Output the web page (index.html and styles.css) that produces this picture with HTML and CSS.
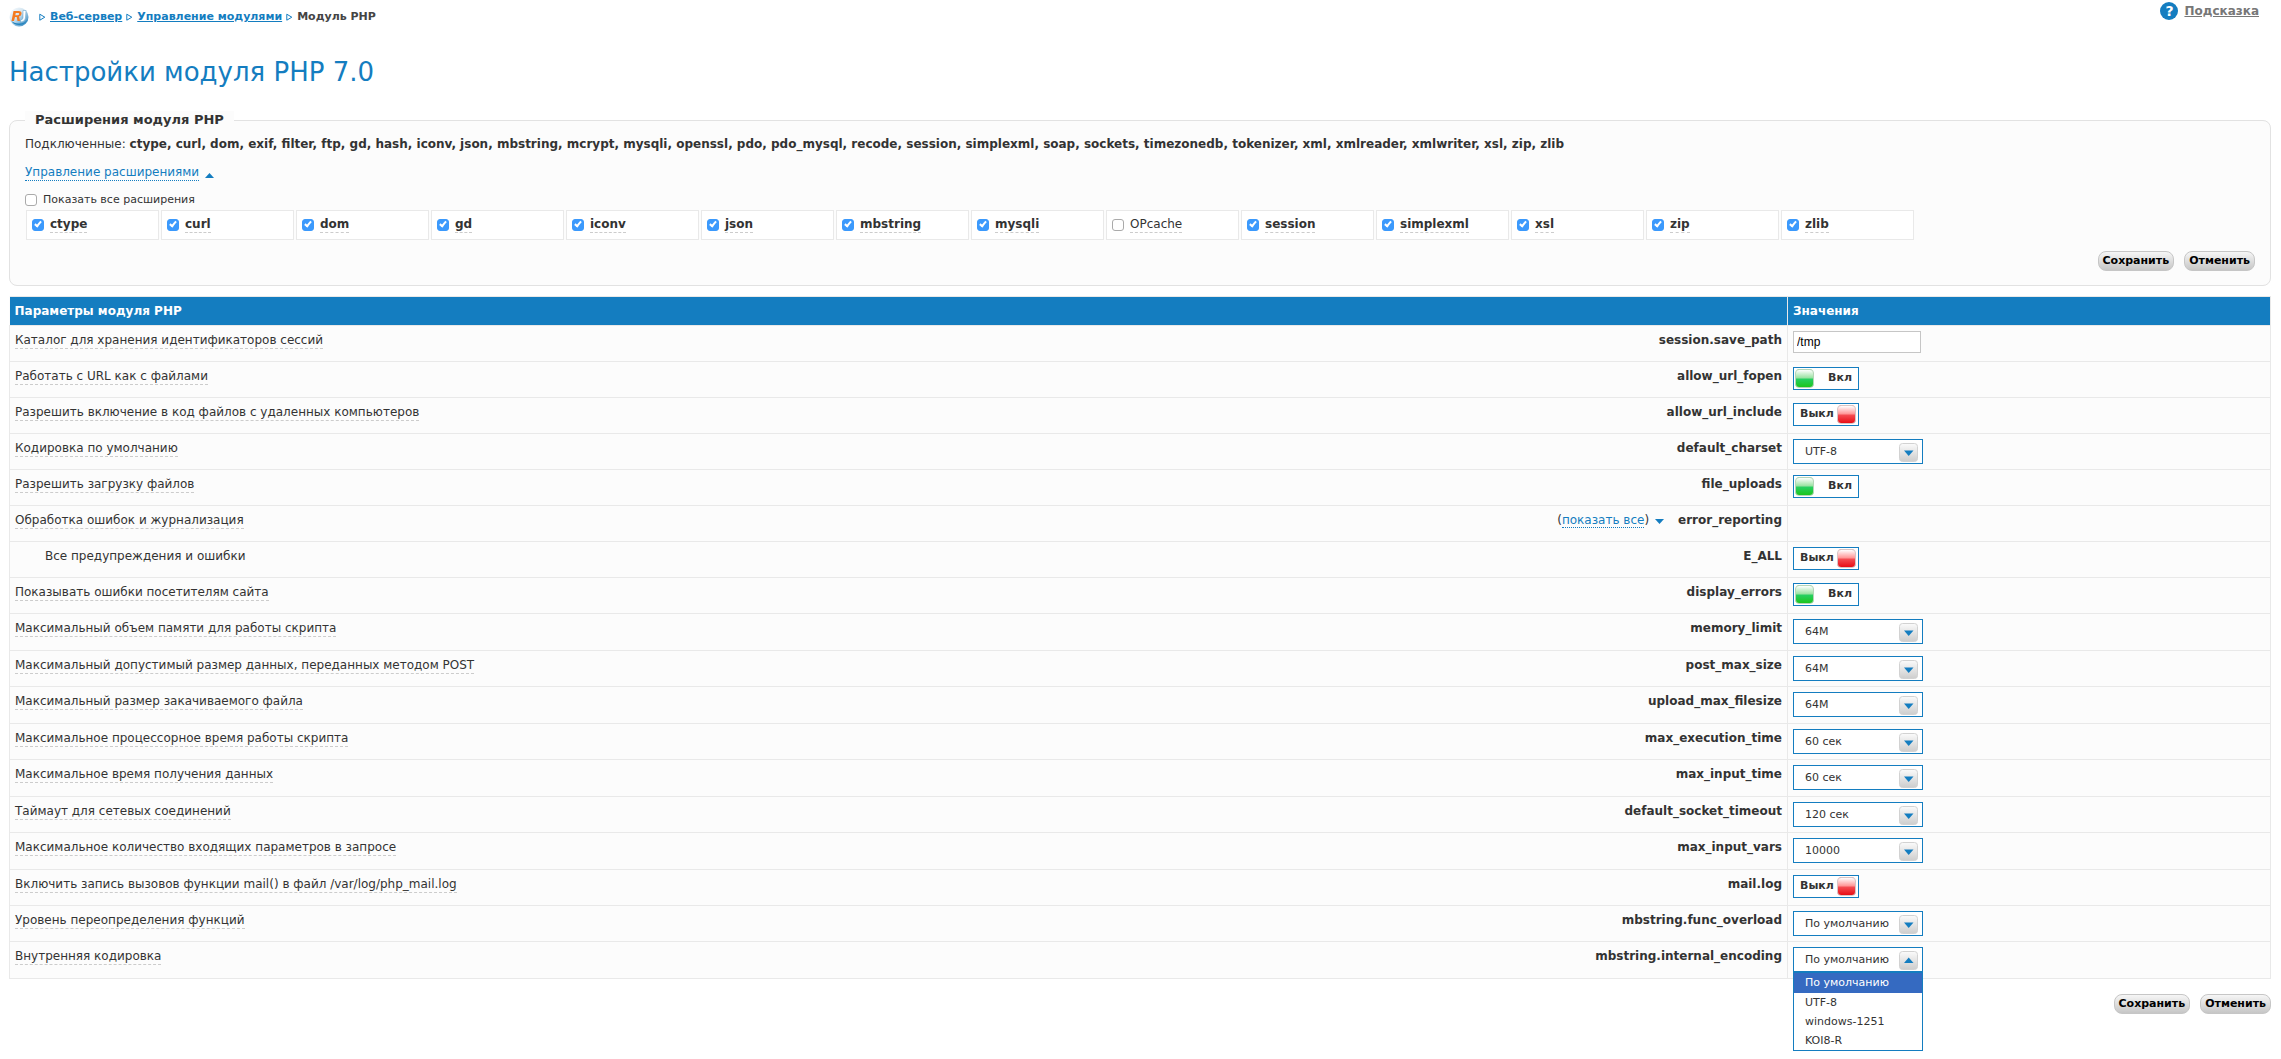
FILE: index.html
```html
<!DOCTYPE html>
<html lang="ru">
<head>
<meta charset="utf-8">
<title>Настройки модуля PHP 7.0</title>
<link rel="stylesheet" href="styles.css">
</head>
<body>
<svg width="0" height="0" class="defs" aria-hidden="true">
  <defs>
    <linearGradient id="arrow-face" x1="0" y1="0" x2="0" y2="1"><stop offset="0" stop-color="#fbfbfb"/><stop offset="1" stop-color="#cdcdcd"/></linearGradient>
    <symbol id="down" viewBox="0 0 19 19"><rect x=".5" y=".5" width="18" height="18" rx="3" fill="url(#arrow-face)" stroke="#d2d2d2"/><path d="M5 7.500h9.500L9.700 13z" fill="#147dc0"/></symbol>
    <symbol id="up" viewBox="0 0 19 19"><rect x=".5" y=".5" width="18" height="18" rx="3" fill="url(#arrow-face)" stroke="#d2d2d2"/><path d="M5 12h9.500L9.700 6.500z" fill="#147dc0"/></symbol>
    <symbol id="crumb" viewBox="0 0 7 9"><path d="M.8 1.200v6L5.800 4.200z" fill="none" stroke="#147dc0"/></symbol>
  </defs>
</svg>
<header class="top">
  <nav class="crumbs" aria-label="Навигация">
    <svg class="logo" viewBox="0 0 20 20" aria-hidden="true">
      <defs><linearGradient id="globe" x1="0" y1="0" x2="1" y2="1"><stop offset="0" stop-color="#fff"/><stop offset=".45" stop-color="#cfe3f0"/><stop offset="1" stop-color="#0f73b5"/></linearGradient></defs>
      <circle cx="10" cy="10" r="9.500" fill="url(#globe)"/>
      <path d="M2 13.500A9.500 9.500 0 0 0 19 12Q16 16.500 10 16.500 5 16.500 2 13.500z" fill="#2585bf"/>
      <path d="M4.500 4h5Q13 4 12.500 7 12 9 10 9.600L11 14H8.500L7.700 10H6L5 14H2.500zM6.800 6 6.300 8.200H8.500Q10 8.200 10.200 7T9 6z" fill="#f47a1f"/>
      <path d="M14 3.500h3L16.500 11Q16 15 11.500 15V13Q13.500 13 14 11z" fill="#fff" stroke="#5b9fc9" stroke-width=".5"/>
    </svg>
    <svg class="sep" aria-hidden="true"><use href="#crumb"/></svg>
    <a href="#server">Веб-сервер</a>
    <svg class="sep" aria-hidden="true"><use href="#crumb"/></svg>
    <a href="#modules">Управление модулями</a>
    <svg class="sep" aria-hidden="true"><use href="#crumb"/></svg>
    <span class="current">Модуль PHP</span>
  </nav>
  <a class="help" href="#help"><span class="help-icon" aria-hidden="true">?</span><span class="help-text">Подсказка</span></a>
</header>
<main>
  <h1>Настройки модуля PHP 7.0</h1>
  <fieldset class="box">
    <legend>Расширения модуля PHP</legend>
    <p class="enabled">Подключенные: <b>ctype, curl, dom, exif, filter, ftp, gd, hash, iconv, json, mbstring, mcrypt, mysqli, openssl, pdo, pdo_mysql, recode, session, simplexml, soap, sockets, timezonedb, tokenizer, xml, xmlreader, xmlwriter, xsl, zip, zlib</b></p>
    <p class="manage"><a class="dotted" href="#ext">Управление расширениями</a><svg class="tri" viewBox="0 0 9 5" aria-hidden="true"><path d="M0 5h9L4.500 0z"/></svg></p>
    <label class="show-all"><input class="check" type="checkbox">Показать все расширения</label>
    <div class="exts" id="ext">
      <label class="ext"><input class="check" type="checkbox" checked><span>ctype</span></label>
      <label class="ext"><input class="check" type="checkbox" checked><span>curl</span></label>
      <label class="ext"><input class="check" type="checkbox" checked><span>dom</span></label>
      <label class="ext"><input class="check" type="checkbox" checked><span>gd</span></label>
      <label class="ext"><input class="check" type="checkbox" checked><span>iconv</span></label>
      <label class="ext"><input class="check" type="checkbox" checked><span>json</span></label>
      <label class="ext"><input class="check" type="checkbox" checked><span>mbstring</span></label>
      <label class="ext"><input class="check" type="checkbox" checked><span>mysqli</span></label>
      <label class="ext"><input class="check" type="checkbox"><span>OPcache</span></label>
      <label class="ext"><input class="check" type="checkbox" checked><span>session</span></label>
      <label class="ext"><input class="check" type="checkbox" checked><span>simplexml</span></label>
      <label class="ext"><input class="check" type="checkbox" checked><span>xsl</span></label>
      <label class="ext"><input class="check" type="checkbox" checked><span>zip</span></label>
      <label class="ext"><input class="check" type="checkbox" checked><span>zlib</span></label>
    </div>
    <div class="actions"><button class="btn" type="button">Сохранить</button><button class="btn" type="button">Отменить</button></div>
  </fieldset>
  <table class="params">
    <thead><tr><th colspan="2" scope="col">Параметры модуля PHP</th><th class="value" scope="col">Значения</th></tr></thead>
    <tbody>
      <tr><td><span class="hint">Каталог для хранения идентификаторов сессий</span></td><td class="name"><label for="p1">session.save_path</label></td><td class="value"><input class="text" id="p1" type="text" value="/tmp"></td></tr>
      <tr><td><span class="hint">Работать с URL как с файлами</span></td><td class="name"><label for="p2">allow_url_fopen</label></td><td class="value"><label class="toggle"><input id="p2" type="checkbox" role="switch" checked><span class="on">Вкл</span><span class="off">Выкл</span></label></td></tr>
      <tr><td><span class="hint">Разрешить включение в код файлов с удаленных компьютеров</span></td><td class="name"><label for="p3">allow_url_include</label></td><td class="value"><label class="toggle"><input id="p3" type="checkbox" role="switch"><span class="on">Вкл</span><span class="off">Выкл</span></label></td></tr>
      <tr><td><span class="hint">Кодировка по умолчанию</span></td><td class="name"><label for="p4">default_charset</label></td><td class="value"><div class="select"><select id="p4"><option>UTF-8</option></select><svg aria-hidden="true"><use href="#down"/></svg></div></td></tr>
      <tr><td><span class="hint">Разрешить загрузку файлов</span></td><td class="name"><label for="p5">file_uploads</label></td><td class="value"><label class="toggle"><input id="p5" type="checkbox" role="switch" checked><span class="on">Вкл</span><span class="off">Выкл</span></label></td></tr>
      <tr><td><span class="hint">Обработка ошибок и журнализация</span></td><td class="name"><span class="more">(<a class="dotted" href="#all">показать все</a>)<svg class="tri" viewBox="0 0 9 5" aria-hidden="true"><path d="M0 0h9L4.500 5z"/></svg></span>error_reporting</td><td class="value"></td></tr>
      <tr><td class="sub">Все предупреждения и ошибки</td><td class="name"><label for="p7">E_ALL</label></td><td class="value"><label class="toggle"><input id="p7" type="checkbox" role="switch"><span class="on">Вкл</span><span class="off">Выкл</span></label></td></tr>
      <tr><td><span class="hint">Показывать ошибки посетителям сайта</span></td><td class="name"><label for="p8">display_errors</label></td><td class="value"><label class="toggle"><input id="p8" type="checkbox" role="switch" checked><span class="on">Вкл</span><span class="off">Выкл</span></label></td></tr>
      <tr class="tall"><td><span class="hint">Максимальный объем памяти для работы скрипта</span></td><td class="name"><label for="p9">memory_limit</label></td><td class="value"><div class="select"><select id="p9"><option>64M</option></select><svg aria-hidden="true"><use href="#down"/></svg></div></td></tr>
      <tr><td><span class="hint">Максимальный допустимый размер данных, переданных методом POST</span></td><td class="name"><label for="p10">post_max_size</label></td><td class="value"><div class="select"><select id="p10"><option>64M</option></select><svg aria-hidden="true"><use href="#down"/></svg></div></td></tr>
      <tr class="tall"><td><span class="hint">Максимальный размер закачиваемого файла</span></td><td class="name"><label for="p11">upload_max_filesize</label></td><td class="value"><div class="select"><select id="p11"><option>64M</option></select><svg aria-hidden="true"><use href="#down"/></svg></div></td></tr>
      <tr><td><span class="hint">Максимальное процессорное время работы скрипта</span></td><td class="name"><label for="p12">max_execution_time</label></td><td class="value"><div class="select"><select id="p12"><option>60 сек</option></select><svg aria-hidden="true"><use href="#down"/></svg></div></td></tr>
      <tr class="tall"><td><span class="hint">Максимальное время получения данных</span></td><td class="name"><label for="p13">max_input_time</label></td><td class="value"><div class="select"><select id="p13"><option>60 сек</option></select><svg aria-hidden="true"><use href="#down"/></svg></div></td></tr>
      <tr><td><span class="hint">Таймаут для сетевых соединений</span></td><td class="name"><label for="p14">default_socket_timeout</label></td><td class="value"><div class="select"><select id="p14"><option>120 сек</option></select><svg aria-hidden="true"><use href="#down"/></svg></div></td></tr>
      <tr class="tall"><td><span class="hint">Максимальное количество входящих параметров в запросе</span></td><td class="name"><label for="p15">max_input_vars</label></td><td class="value"><div class="select"><select id="p15"><option>10000</option></select><svg aria-hidden="true"><use href="#down"/></svg></div></td></tr>
      <tr><td><span class="hint">Включить запись вызовов функции mail() в файл /var/log/php_mail.log</span></td><td class="name"><label for="p16">mail.log</label></td><td class="value"><label class="toggle"><input id="p16" type="checkbox" role="switch"><span class="on">Вкл</span><span class="off">Выкл</span></label></td></tr>
      <tr><td><span class="hint">Уровень переопределения функций</span></td><td class="name"><label for="p17">mbstring.func_overload</label></td><td class="value"><div class="select"><select id="p17"><option>По умолчанию</option></select><svg aria-hidden="true"><use href="#down"/></svg></div></td></tr>
      <tr class="tall"><td><span class="hint">Внутренняя кодировка</span></td><td class="name"><label for="p18">mbstring.internal_encoding</label></td><td class="value"><div class="select"><select id="p18"><option>По умолчанию</option><option>UTF-8</option><option>windows-1251</option><option>KOI8-R</option></select><svg aria-hidden="true"><use href="#up"/></svg>
        <ul class="menu" role="listbox" aria-label="Внутренняя кодировка"><li role="option" aria-selected="true">По умолчанию</li><li role="option">UTF-8</li><li role="option">windows-1251</li><li role="option">KOI8-R</li></ul></div></td></tr>
    </tbody>
  </table>
  <div class="actions page-actions"><button class="btn" type="button">Сохранить</button><button class="btn" type="button">Отменить</button></div>
</main>
</body>
</html>
```
FILE: styles.css
```css
* { box-sizing: border-box; }
body {
  min-height: 100vh;
  margin: 0;
  padding: 0 10px 44px 9px;
  background: #fff;
  color: #333;
  font: 12px/16px Verdana, "DejaVu Sans", sans-serif;
}
a { color: #147dc0; }
.defs { position: absolute; }

.top {
  display: flex;
  justify-content: space-between;
  align-items: flex-start;
  height: 54px;
  font-size: 11px;
  font-weight: bold;
}
.crumbs { display: flex; align-items: center; gap: 4px; padding-top: 7px; }
.logo { width: 20px; height: 20px; margin-right: 6px; }
.sep { width: 7px; height: 9px; }
.current { color: #444; }
.help { display: flex; align-items: center; gap: 6px; margin: 2px 12px 0 0; color: #777; font-size: 12px; text-decoration: none; }
.help-text { text-decoration: underline; }
.help-icon {
  width: 18px;
  height: 18px;
  border-radius: 50%;
  background: #147dc0;
  color: #fff;
  font-size: 14px;
  line-height: 18px;
  text-align: center;
}

h1 { margin: 0; color: #147dc0; font-size: 26px; font-weight: normal; line-height: 36px; }

.box {
  min-width: 0;
  margin: 21px 0 10px;
  padding: 7px 15px 14px;
  border: 1px solid #e2e2e2;
  border-radius: 8px;
  background: #fcfcfc;
}
.box legend { padding: 0 10px; background: #fcfcfc; font-size: 13px; font-weight: bold; line-height: 18px; }
.enabled { margin: 0 0 13px; }
.manage { display: flex; align-items: center; gap: 6px; margin: 0 0 11px; line-height: 15px; }
.dotted { border-bottom: 1px dotted #147dc0; text-decoration: none; }
.tri { width: 9px; height: 5px; fill: #147dc0; }
.manage .tri { margin-top: 5px; }
.show-all { display: flex; align-items: center; gap: 6px; font-size: 11px; }

.check {
  appearance: none;
  position: relative;
  width: 12px;
  height: 12px;
  margin: 0;
  border: 1px solid #aaa;
  border-radius: 3px;
  background: #fff;
}
.check:checked { border-color: #3b99fc; background: #3b99fc; }
.check:checked::after {
  content: "";
  position: absolute;
  left: 3px;
  top: 0;
  width: 2px;
  height: 5px;
  border: solid #fff;
  border-width: 0 2px 2px 0;
  transform: rotate(40deg);
}
.exts { display: flex; flex-wrap: wrap; gap: 2px; margin: 2px 1px 0; }
.ext {
  display: flex;
  align-items: center;
  gap: 6px;
  width: 133px;
  height: 30px;
  padding: 0 5px;
  border: 1px solid #e9e9e9;
  background: #fff;
}
.ext span { border-bottom: 1px dashed #ccc; line-height: 15px; }
.check:checked + span { font-weight: bold; }

.actions { display: flex; justify-content: flex-end; gap: 10px; margin-top: 11px; }
.btn {
  height: 20px;
  padding: 0 4px;
  border: 1px solid #c6c6c6;
  border-radius: 8px;
  background: linear-gradient(#f6f6f6, #c6c6c6);
  color: #000;
  font: bold 11px/16px Verdana, "DejaVu Sans", sans-serif;
}
.page-actions { margin-top: 15px; }

.params { width: 100%; border-collapse: collapse; background: #fcfcfc; }
.params th {
  height: 29px;
  padding: 0 5px;
  border: 1px solid #e9e9e9;
  border-width: 1px 1px 1px 0;
  background: #147dc0;
  color: #fff;
  text-align: left;
}
.params td { height: 36px; padding: 6px 5px 0; border-bottom: 1px solid #e9e9e9; vertical-align: top; }
.params .tall td { height: 37px; }
.params td:first-child { border-left: 1px solid #e9e9e9; }
.params .value { width: 483px; border-left: 1px solid #e9e9e9; border-right: 1px solid #e9e9e9; }
.params td.value { padding-top: 5px; }
.params .sub { padding-left: 35px; }
.name { font-weight: bold; text-align: right; }
.hint { display: inline-block; border-bottom: 1px dashed #ccc; }
.more { margin-right: 14px; font-weight: normal; }
.more .tri { margin-left: 6px; }

.text {
  display: block;
  width: 128px;
  height: 22px;
  padding: 0 3px;
  border: 1px solid #c6c6c6;
  background: #fff;
  color: #000;
  font: 12px/16px "Liberation Sans", Arial, sans-serif;
}
.toggle {
  display: flex;
  align-items: center;
  justify-content: space-between;
  width: 66px;
  height: 23px;
  padding: 0 6px 2px 1px;
  border: 1px solid #147dc0;
  background: #fff;
  font-size: 11px;
  font-weight: bold;
}
.toggle input {
  appearance: none;
  width: 19px;
  height: 19px;
  margin: 2px 0 0;
  border: 1px solid #d9c5c5;
  border-radius: 4px;
  background: linear-gradient(#fff, #f99 45%, #f34a50 55%, #e80d15);
}
.toggle input:checked { border-color: #b5d5b8; background: linear-gradient(#fff, #9de3a4 45%, #26cf5f 55%, #1dc51d); }
.toggle .off, .toggle input:checked + .on { display: block; }
.toggle .on, .toggle input:checked ~ .off { display: none; }
.toggle:has(input:not(:checked)) { flex-direction: row-reverse; padding: 0 2px 2px 6px; }

.select { position: relative; display: flex; align-items: center; width: 130px; height: 25px; border: 1px solid #147dc0; background: #fff; }
.select select {
  appearance: none;
  width: 100%;
  height: 23px;
  margin: 0;
  padding: 1px 0 0 11px;
  border: 0;
  background: transparent;
  color: #333;
  font: 11px/16px Verdana, "DejaVu Sans", sans-serif;
}
.select svg { position: absolute; right: 4px; top: 3px; width: 19px; height: 19px; pointer-events: none; }
.menu {
  position: absolute;
  left: -1px;
  right: -1px;
  top: 24px;
  margin: 0;
  padding: 0;
  border: 1px solid #147dc0;
  background: #fff;
  font-size: 11px;
  line-height: 19px;
  list-style: none;
}
.menu li { padding: 0 11px; }
.menu li[aria-selected="true"] { background: #356ac1; color: #fff; line-height: 20px; }
```
